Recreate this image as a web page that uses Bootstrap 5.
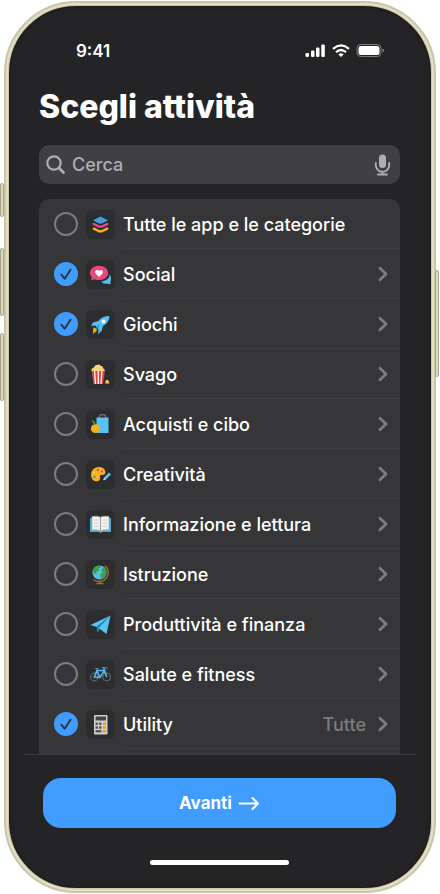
<!DOCTYPE html>
<html lang="it" data-bs-theme="dark">
<head>
<meta charset="utf-8">
<meta name="viewport" content="width=device-width, initial-scale=1">
<title>Scegli attività</title>
<link href="https://cdn.jsdelivr.net/npm/bootstrap@5.3.0/dist/css/bootstrap.min.css" rel="stylesheet">
<style>
body { background: #fff; color: #fff; font-family: Inter, "Liberation Sans", sans-serif; }
.device-wrap { padding: 1px 4px; }
.device { background: #242426; border: 5px solid #c9c5ab; border-radius: 72px; box-shadow: inset 0 0 0 1px #1f201a, inset 0 0 5px #1d1d1f; }
.device::before { content: ""; position: absolute; inset: -3px; border: 2px solid #e4dec3; border-radius: 70px; pointer-events: none; }
.side-key { position: absolute; width: 4px; border: 1px solid #a9a68e; background: #dcd8bc; border-radius: 2px; }
.key-action { left: -9px; top: 177px; height: 34px; }
.key-up { left: -9px; top: 242px; height: 68px; }
.key-down { left: -9px; top: 327px; height: 68px; }
.key-power { right: -8px; top: 264px; height: 107px; }
.status { padding: 34px 46px 0 67px; height: 56px; }
.clock { font-size: 17px; line-height: 22px; font-weight: 600; }
.screen-title { font-size: 32px; line-height: 40px; font-weight: 800; margin: 25px 31px 18px 30px; }
.search { background: #3f3f44; border-radius: 10px; margin: 0 31px 15px 30px; height: 39px; padding: 0 9px 0 7px; color: #aeaeb5; }
.search input { font-size: 18px; line-height: 24px; font-weight: 500; padding: 0 0 0 6px; }
.search input, .search input::placeholder { color: #aeaeb5; opacity: 1; }
.activities { background: #363638; border-radius: 10px 10px 0 0; margin: 0 31px 0 30px; padding-bottom: 5px; overflow: hidden; }
.activity { height: 50px; padding-left: 15px; }
.tick { position: relative; width: 24px; height: 24px; }
.tick input.form-check-input { width: 24px; height: 24px; border: 2px solid #7c7c80; border-radius: 50%; background: transparent; }
.tick input.form-check-input:checked { border-color: #409cff; background: #409cff; }
.tick svg { position: absolute; inset: 0; width: 24px; height: 24px; pointer-events: none; display: none; }
.tick input:checked + svg { display: block; }
.tile { width: 29px; height: 29px; border-radius: 6px; background: #2b2d2e; margin: 0 8px; }
.line { border-bottom: 1px solid #3e3e40; padding-right: 12px; }
.caption { font-size: 18px; line-height: 24px; font-weight: 500; padding-top: 3px; }
.amount { color: #7c7c80; font-size: 18px; padding: 3px 12px 0 0; line-height: 24px; font-weight: 500; }
.footer-bar { border-top: 1px solid #3b3b3d; margin: 0 15px; padding: 23px 20px 0 19px; }
.next, .next:hover { color: #fff; background: #409cff; border: 0; border-radius: 18px; height: 50px; font-size: 17px; line-height: 24px; font-weight: 700; gap: 6px; }
.home-line { width: 139px; height: 5px; border-radius: 3px; background: #fff; margin: 32px auto 0; }
.base { height: 23px; }
</style>
<script src="https://cdn.jsdelivr.net/npm/bootstrap@5.3.0/dist/js/bootstrap.bundle.min.js"></script>
</head>
<body>
<svg class="d-none" aria-hidden="true">
  <symbol id="check" viewBox="0 0 24 24"><path d="M7.300 12.700l3.400 4L16.500 7.800" fill="none" stroke="#303338" stroke-width="2" stroke-linecap="round" stroke-linejoin="round"/></symbol>
  <symbol id="chevron" viewBox="0 0 10 16"><path d="M2 2.200L8 8l-6 5.800" fill="none" stroke="#7c7c80" stroke-width="2.900" stroke-linecap="round" stroke-linejoin="round"/></symbol>
</svg>
<div class="device-wrap">
<main class="device position-relative">
  <span class="side-key key-action"></span><span class="side-key key-up"></span><span class="side-key key-down"></span><span class="side-key key-power"></span>
  <div class="status d-flex justify-content-between align-items-center">
    <span class="clock">9:41</span>
    <svg width="80" height="16" viewBox="0 0 80 16" fill="#fff" aria-hidden="true">
      <rect x="0.500" y="10" width="3.500" height="4" rx="1.200"/><rect x="6" y="7.500" width="3.500" height="6.500" rx="1.200"/><rect x="11" y="4.500" width="3.500" height="9.500" rx="1.200"/><rect x="16.300" y="1.500" width="3.500" height="12.500" rx="1.200"/>
      <g fill="none" stroke="#fff" stroke-width="2.200"><path d="M28 5.800Q36 -1 44 5.800"/><path d="M31 9.200Q36 4.800 41 9.200"/></g><path d="M33.400 11.400Q36 9.200 38.600 11.400L36 14z"/>
      <rect x="52" y="1.500" width="24" height="12" rx="3.800" fill="none" stroke="#7c7c7e"/><rect x="53.500" y="3" width="21" height="9" rx="2.500"/><path d="M77.500 5.500q1.700 .5 1.700 2t-1.700 2z" fill="#7c7c7e"/>
    </svg>
  </div>
  <h1 class="screen-title">Scegli attività</h1>
  <div class="search d-flex align-items-center">
    <svg class="flex-shrink-0" width="20" height="20" viewBox="0 0 20 20" fill="none" stroke="currentColor" stroke-linecap="round" aria-hidden="true"><circle cx="8" cy="8" r="6.700" stroke-width="2.200"/><path d="M13 13l4.500 4.500" stroke-width="2.800"/></svg>
    <input class="form-control-plaintext flex-fill" type="text" placeholder="Cerca" aria-label="Cerca">
    <button class="btn p-0 border-0 d-flex" type="button" aria-label="Dettatura"><svg width="17" height="22" viewBox="0 0 17 22" fill="none" stroke="#aeaeb5" stroke-linecap="round"><rect x="5" y="0.500" width="7" height="13.500" rx="3.500" fill="#aeaeb5" stroke="none"/><path d="M1.800 9v2.200a6.700 6.700 0 0 0 13.400 0V9M8.500 18v2.500M4 20.500h9" stroke-width="1.800"/></svg></button>
  </div>
  <ul class="activities list-unstyled">
    <li class="activity d-flex align-items-center">
      <span class="tick flex-shrink-0"><input class="form-check-input m-0 d-block" type="checkbox" id="a0"><svg><use href="#check"/></svg></span>
      <svg class="tile flex-shrink-0" viewBox="0 0 29 29"><path d="M7 10.300L14.500 6.500 22 10.300l-5 2.700q-2.500 1-5 0z" fill="#469ddb"/><path d="M7.800 14l4.700 2.300q2 .7 4 0l4.700-2.300" fill="none" stroke="#e9487e" stroke-width="2.400" stroke-linecap="round"/><path d="M7.800 18.700l4.700 2.300q2 .7 4 0l4.700-2.300" fill="none" stroke="#fdb022" stroke-width="2.400" stroke-linecap="round"/></svg>
      <div class="line d-flex flex-fill h-100 align-items-center"><label class="caption flex-fill" for="a0">Tutte le app e le categorie</label></div>
    </li>
    <li class="activity d-flex align-items-center">
      <span class="tick flex-shrink-0"><input class="form-check-input m-0 d-block" type="checkbox" id="a1" checked><svg><use href="#check"/></svg></span>
      <svg class="tile flex-shrink-0" viewBox="0 0 29 29"><path d="M19 20.500q4.500-1.500 4.500-6 1.500 1.500 1.500 4.300 0 1.800-.8 3l.7 2.500-2.800-.6q-5 .8-7-2.200 2 .2 3.900-1z" fill="#58bff2"/><path d="M13 5.800c5 0 9 3 9 7.200s-4 7.100-9 7.100q-2.500 0-4.500-.9L5 20.400l.8-3Q4 15.600 4 13c0-4.200 4-7.200 9-7.200z" fill="#e9487e"/><path d="M13 17l-3.400-3.500c-1.700-2.300 1.200-5 3.400-2.500 2.200-2.500 5.100.2 3.400 2.500z" fill="#fff"/></svg>
      <div class="line d-flex flex-fill h-100 align-items-center"><label class="caption flex-fill" for="a1">Social</label><a class="d-flex" href="#social" aria-label="Apri Social"><svg width="10" height="16"><use href="#chevron"/></svg></a></div>
    </li>
    <li class="activity d-flex align-items-center">
      <span class="tick flex-shrink-0"><input class="form-check-input m-0 d-block" type="checkbox" id="a2" checked><svg><use href="#check"/></svg></span>
      <svg class="tile flex-shrink-0" viewBox="0 0 29 29"><path d="M7.500 17.500q2.500 0 3.500 3l-4 3.500z" fill="#fdb022"/><path d="M23.500 6Q16 6 12.500 11L7 12.500 5 16l4-.5q2 1.500 3.500 4L12 24l3.500-3 1.500-5Q23 13 23.500 6z" fill="#58bff2"/><circle cx="17.500" cy="11.500" r="2" fill="#e8f6ff"/><path d="M10 19l3-4" stroke="#2787bd" stroke-width="1.200"/></svg>
      <div class="line d-flex flex-fill h-100 align-items-center"><label class="caption flex-fill" for="a2">Giochi</label><a class="d-flex" href="#giochi" aria-label="Apri Giochi"><svg width="10" height="16"><use href="#chevron"/></svg></a></div>
    </li>
    <li class="activity d-flex align-items-center">
      <span class="tick flex-shrink-0"><input class="form-check-input m-0 d-block" type="checkbox" id="a3"><svg><use href="#check"/></svg></span>
      <svg class="tile flex-shrink-0" viewBox="0 0 29 29"><path d="M5.500 10l2 14h9.500l2-14z" fill="#e5413e"/><path d="M8.500 10l1 14M12.300 10v14M16 10l-1 14" stroke="#fff" stroke-width="1.300"/><path d="M5.500 11Q5 8 8 7.500 8.500 4.500 11 5q2-1.500 3.500.8 2.500 0 2.500 2.500 2 .7 1.700 2.700z" fill="#f6d27a"/><path d="M19 23.500l.8-3q1.700-1.500 2.800.5l.8 2.500z" fill="#f4c661"/></svg>
      <div class="line d-flex flex-fill h-100 align-items-center"><label class="caption flex-fill" for="a3">Svago</label><a class="d-flex" href="#svago" aria-label="Apri Svago"><svg width="10" height="16"><use href="#chevron"/></svg></a></div>
    </li>
    <li class="activity d-flex align-items-center">
      <span class="tick flex-shrink-0"><input class="form-check-input m-0 d-block" type="checkbox" id="a4"><svg><use href="#check"/></svg></span>
      <svg class="tile flex-shrink-0" viewBox="0 0 29 29"><path d="M13 9Q13 4.500 16.500 4.500T20 9" fill="none" stroke="#6c6f70" stroke-width="1.300"/><path d="M10.500 7.500h12v15.500h-12z" fill="#5ac0f5"/><circle cx="9.300" cy="18.700" r="4.400" fill="#fbb01f"/><path d="M9.500 14.500Q6 13.500 6.300 10q3 1 3.200 4.500z" fill="#36a543"/></svg>
      <div class="line d-flex flex-fill h-100 align-items-center"><label class="caption flex-fill" for="a4">Acquisti e cibo</label><a class="d-flex" href="#acquisti" aria-label="Apri Acquisti e cibo"><svg width="10" height="16"><use href="#chevron"/></svg></a></div>
    </li>
    <li class="activity d-flex align-items-center">
      <span class="tick flex-shrink-0"><input class="form-check-input m-0 d-block" type="checkbox" id="a5"><svg><use href="#check"/></svg></span>
      <svg class="tile flex-shrink-0" viewBox="0 0 29 29"><path d="M5 15Q5.500 7.500 12.500 7 19 7 19.500 12.500 19 15.500 16 14.800q-2.500 0-2 2.200.5 4-3 4.300Q5.500 21.500 5 15z" fill="#fbb01f"/><circle cx="8" cy="12.500" r="1.100" fill="#fdd451"/><circle cx="12" cy="10" r="1.200" fill="#e5484d"/><circle cx="16" cy="11.500" r="1" fill="#6d5bd0"/><circle cx="8.500" cy="17" r="1.300" fill="#45a7a0"/><path d="M18.500 19l5.500-5.500" stroke="#58bff2" stroke-width="2.600"/><path d="M17.500 20l1.500-1.500" stroke="#ddd" stroke-width="1.500"/></svg>
      <div class="line d-flex flex-fill h-100 align-items-center"><label class="caption flex-fill" for="a5">Creatività</label><a class="d-flex" href="#creativita" aria-label="Apri Creatività"><svg width="10" height="16"><use href="#chevron"/></svg></a></div>
    </li>
    <li class="activity d-flex align-items-center">
      <span class="tick flex-shrink-0"><input class="form-check-input m-0 d-block" type="checkbox" id="a6"><svg><use href="#check"/></svg></span>
      <svg class="tile flex-shrink-0" viewBox="0 0 29 29"><path d="M4 8h21v14h-9l-1.500 1L13 22H4z" fill="#4dacd7"/><path d="M6 6.500q5-1 8.500.7Q18 5.500 23 6.500V20q-5-1-8.500 1Q11 19 6 20z" fill="#f4f3ef" stroke="#aaa9a5" stroke-width=".7"/><path d="M14.500 7v13.500" stroke="#9b9a96"/><path d="M8 10h4.500M8 13h4.500M8 16h4.500M16.500 10H21M16.500 13H21M16.500 16H21" stroke="#c4c3bf" stroke-width=".8"/></svg>
      <div class="line d-flex flex-fill h-100 align-items-center"><label class="caption flex-fill" for="a6">Informazione e lettura</label><a class="d-flex" href="#informazione" aria-label="Apri Informazione e lettura"><svg width="10" height="16"><use href="#chevron"/></svg></a></div>
    </li>
    <li class="activity d-flex align-items-center">
      <span class="tick flex-shrink-0"><input class="form-check-input m-0 d-block" type="checkbox" id="a7"><svg><use href="#check"/></svg></span>
      <svg class="tile flex-shrink-0" viewBox="0 0 29 29"><path d="M19 5.500a9 9 0 0 1-11.500 14M14 21v2.500M10.500 23.500h7" fill="none" stroke="#a8682e" stroke-width="1.500"/><circle cx="13.500" cy="12.500" r="7" fill="#5bbdf2"/><path d="M8 8.500q3-3.500 6-2.800l1 2-2.500 1 .5 2.500-3 .5 1 3-3-1.500q-2-2 0-4.700zM15 10l3-2.800q3 3 2.200 7L17 18.500l-3-1.500.5-3 2-1.500z" fill="#36a543"/></svg>
      <div class="line d-flex flex-fill h-100 align-items-center"><label class="caption flex-fill" for="a7">Istruzione</label><a class="d-flex" href="#istruzione" aria-label="Apri Istruzione"><svg width="10" height="16"><use href="#chevron"/></svg></a></div>
    </li>
    <li class="activity d-flex align-items-center">
      <span class="tick flex-shrink-0"><input class="form-check-input m-0 d-block" type="checkbox" id="a8"><svg><use href="#check"/></svg></span>
      <svg class="tile flex-shrink-0" viewBox="0 0 29 29"><path d="M24.500 5.500L4.500 15l6 2z" fill="#5ac4f7"/><path d="M24.500 5.500L10.500 17l.8 6 2.500-4z" fill="#2682b0"/><path d="M24.500 5.500L12.500 18l8 6z" fill="#5ac4f7"/></svg>
      <div class="line d-flex flex-fill h-100 align-items-center"><label class="caption flex-fill" for="a8">Produttività e finanza</label><a class="d-flex" href="#produttivita" aria-label="Apri Produttività e finanza"><svg width="10" height="16"><use href="#chevron"/></svg></a></div>
    </li>
    <li class="activity d-flex align-items-center">
      <span class="tick flex-shrink-0"><input class="form-check-input m-0 d-block" type="checkbox" id="a9"><svg><use href="#check"/></svg></span>
      <svg class="tile flex-shrink-0" viewBox="0 0 29 29" fill="none"><circle cx="8.300" cy="17" r="3.800" stroke="#626566" stroke-width="1.200"/><circle cx="20.700" cy="17" r="3.800" stroke="#626566" stroke-width="1.200"/><path d="M8.300 17L11 10.500h7.500L14 17.500zM10.500 9.500l3.500 8M20.700 17L17.500 7.500" stroke="#55baf0" stroke-width="1.500"/><path d="M9 8.500h3.500M16 7.500h4.500l.7 1.500" stroke="#77797a" stroke-width="1.200"/></svg>
      <div class="line d-flex flex-fill h-100 align-items-center"><label class="caption flex-fill" for="a9">Salute e fitness</label><a class="d-flex" href="#salute" aria-label="Apri Salute e fitness"><svg width="10" height="16"><use href="#chevron"/></svg></a></div>
    </li>
    <li class="activity d-flex align-items-center">
      <span class="tick flex-shrink-0"><input class="form-check-input m-0 d-block" type="checkbox" id="a10" checked><svg><use href="#check"/></svg></span>
      <svg class="tile flex-shrink-0" viewBox="0 0 29 29"><rect x="8" y="5" width="13.500" height="19.500" rx="1.200" fill="#d4d1cc"/><path d="M9.500 6.500h10.500v4H9.500z" fill="#454746"/><path d="M9.500 12.500h2.500v2.500H9.500zM13 12.500h2.500v2.500H13zM9.500 16.200h2.500v2.500H9.500zM13 16.200h2.500v2.500H13zM9.500 20h6v2.500h-6z" fill="#595a59"/><path d="M17 12.500h3v2.500h-3zM17 16.200h3v2.500h-3zM17 20h3v2.500h-3z" fill="#f59a22"/></svg>
      <div class="line d-flex flex-fill h-100 align-items-center"><label class="caption flex-fill" for="a10">Utility</label><span class="amount">Tutte</span><a class="d-flex" href="#utility" aria-label="Apri Utility"><svg width="10" height="16"><use href="#chevron"/></svg></a></div>
    </li>
  </ul>
  <div class="footer-bar">
    <button class="next btn w-100 d-flex justify-content-center align-items-center" type="button">Avanti <svg width="22" height="14" viewBox="0 0 22 14" fill="none" stroke="#fff" stroke-width="2" stroke-linecap="round" stroke-linejoin="round" aria-hidden="true"><path d="M1.500 7.500h18.500M14.500 2l5.500 5.500-5.500 5.500"/></svg></button>
    <div class="home-line"></div>
    <div class="base"></div>
  </div>
</main>
</div>
</body>
</html>
